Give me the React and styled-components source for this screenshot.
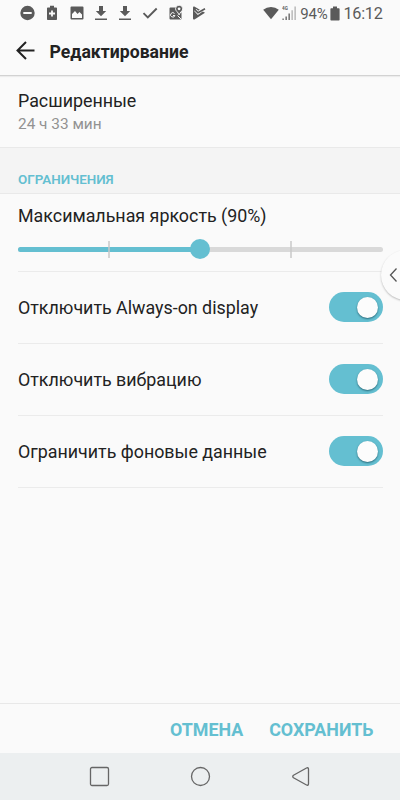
import React, { useState } from "react";
import styled, { createGlobalStyle } from "styled-components";

const GlobalStyle = createGlobalStyle`
	* {
		box-sizing: border-box;
	}
	body {
		margin: 0;
		background: #fafafa;
		font-family: Roboto, "Noto Sans", sans-serif;
	}
	button {
		border: none;
		padding: 0;
		background: none;
		font-family: inherit;
	}
	svg {
		display: block;
		flex: none;
	}
`;

const Screen = styled.div`
	position: relative;
	width: 400px;
	height: 800px;
	display: flex;
	flex-direction: column;
	overflow: hidden;
	background: #fafafa;
	color: #222222;
`;

const StatusBar = styled.div`
	height: 26px;
	flex: none;
	display: flex;
	align-items: center;
	justify-content: space-between;
	padding: 0 17.5px 0 19px;
	color: #5a5a5a;
`;

const StatusGroup = styled.div`
	display: flex;
	align-items: center;
	gap: ${(props) => props.gap}px;
`;

const StatusText = styled.span`
	font-size: ${(props) => props.size}px;
	line-height: 26px;
	letter-spacing: ${(props) => props.spacing || 0}px;
	padding-top: 2px;
`;

const Header = styled.header`
	height: 50px;
	flex: none;
	display: flex;
	align-items: center;
	gap: 14px;
	padding: 0 15.5px;
	border-bottom: 1px solid #d2d2d2;
	box-shadow: 0 1px 1px #ececec;
`;

const Title = styled.h1`
	margin: 0;
	padding-top: 2px;
	font-size: 17.65px;
	font-weight: 700;
	line-height: 24px;
`;

const Summary = styled.div`
	height: 71px;
	flex: none;
	padding: 13px 18px 0;
`;

const Label = styled.div`
	font-size: 17.85px;
	line-height: 24px;
	white-space: nowrap;
`;

const Duration = styled.div`
	font-size: 15.4px;
	line-height: 23px;
	color: #929292;
`;

const SectionTitle = styled.div`
	height: 47px;
	flex: none;
	padding: 23px 18px 0;
	border-top: 1px solid #e9e9e9;
	border-bottom: 1px solid #e9e9e9;
	background: #f4f4f4;
	color: #64bfd1;
	font-size: 13.4px;
	font-weight: 600;
	line-height: 18px;
`;

const Settings = styled.main`
	flex: 1;
	padding: 0 17.5px 0 18px;
`;

const SliderRow = styled.div`
	height: 78px;
	padding-top: 10px;
	border-bottom: 1px solid #ebebeb;
`;

const Slider = styled.div`
	height: 20px;
	margin-top: 11px;
	display: grid;
	align-items: center;
	> * {
		grid-area: 1 / 1;
	}
`;

const Track = styled.div`
	height: 5px;
	width: ${(props) => (props.$filled ? "50%" : "100%")};
	border-radius: 3px;
	background: ${(props) => (props.$filled ? "#64bfd1" : "#d9d9d9")};
`;

const Ticks = styled.div`
	display: flex;
	justify-content: space-between;
	width: 184px;
	justify-self: center;
	i {
		width: 2px;
		height: 17px;
		background: rgba(200, 200, 200, 0.75);
	}
`;

const Thumb = styled.div`
	width: 20px;
	height: 20px;
	justify-self: center;
	border-radius: 50%;
	background: #64bfd1;
`;

const Row = styled.div`
	height: 72px;
	display: flex;
	align-items: center;
	justify-content: space-between;
	border-bottom: 1px solid #ebebeb;
`;

const Switch = styled.button`
	width: 53.5px;
	height: 30px;
	margin-bottom: 1px;
	display: flex;
	align-items: center;
	justify-content: ${(props) => (props.$on ? "flex-end" : "flex-start")};
	padding: 0 4.5px;
	border-radius: 15px;
	background: ${(props) => (props.$on ? "#64bfd1" : "#cccccc")};
	span {
		width: 21px;
		height: 21px;
		border-radius: 50%;
		background: #fcfcfc;
		box-shadow: 0 1px 2px rgba(0, 50, 65, 0.6);
	}
`;

const Actions = styled.footer`
	height: 50px;
	flex: none;
	display: flex;
	align-items: center;
	justify-content: flex-end;
	gap: 26px;
	padding: 2px 26.5px 0 0;
	border-top: 1px solid #e8e8e8;
	button {
		color: #64bfd1;
		font-size: 17.85px;
		font-weight: 700;
		line-height: 24px;
	}
`;

const NavBar = styled.nav`
	height: 47px;
	flex: none;
	display: flex;
	align-items: center;
	justify-content: space-between;
	padding: 0 89px;
	background: #eceff0;
`;

const EdgeHandle = styled.button`
	position: absolute;
	top: 250px;
	left: 381px;
	width: 50px;
	height: 50px;
	display: flex;
	align-items: center;
	padding-left: 7px;
	border-radius: 50%;
	background: #fbfbfb;
	box-shadow: 0 1px 2px rgba(0, 0, 0, 0.25);
`;

const DownloadIcon = () => (
	<svg width='14' height='16' viewBox='0 0 14 16' fill='currentColor'>
		<path d='M5 1h4v5h3.2L7 11.2 1.8 6H5zM1 13.6h12v1.4H1z' />
	</svg>
);

const NotificationIcons = () => (
	<StatusGroup gap={10.3}>
		<svg width='16' height='16' viewBox='0 0 16 16'>
			<circle cx='8.5' cy='8' r='7.2' fill='currentColor' />
			<path d='M4.3 8h8.4' stroke='#fafafa' strokeWidth='2' />
		</svg>
		<svg width='14' height='16' viewBox='0 0 14 16'>
			<path
				fill='currentColor'
				d='M5 .8h4v1.6h2.2q.8 0 .8.8v11q0 .8-.8.8H2.8Q2 15 2 14.200V3.200q0-.8.8-.8H5z'
			/>
			<path d='M7 5.500v6M4 8.500h6' stroke='#fafafa' strokeWidth='1.800' />
		</svg>
		<svg width='14' height='16' viewBox='0 0 14 16'>
			<path
				fill='currentColor'
				fillRule='evenodd'
				d='M1.500 1.500h11q1 0 1 1v11q0 1-1 1h-11q-1 0-1-1v-11q0-1 1-1zM2 13h10V9.500L9.500 7 7.500 9 5 6 2 9z'
			/>
		</svg>
		<DownloadIcon />
		<DownloadIcon />
		<svg width='16' height='16' viewBox='0 0 16 16' fill='none'>
			<path d='M1.500 8.200l4.300 4.300L14.700 3.500' stroke='currentColor' strokeWidth='1.900' />
		</svg>
		<svg width='14' height='16' viewBox='1 0 14 16'>
			<path fill='currentColor' d='M2.500 2.500H12v5h1.500v6q0 1-1 1h-10q-1 0-1-1v-10q0-1 1-1z' />
			<path
				fill='none'
				stroke='#fafafa'
				strokeWidth='1'
				d='M6.500 8.500A2.200 2.200 0 1 0 6.900 10.500H5M9.500 10.500l3.500 3.500'
			/>
			<path
				fill='currentColor'
				stroke='#fafafa'
				strokeWidth='.9'
				d='M11.100.2a3.600 3.600 0 0 1 3.600 3.600c0 2.300-2.600 3-3.600 6.200-1-3.200-3.600-3.900-3.600-6.200A3.600 3.600 0 0 1 11.100.2z'
			/>
			<circle cx='11.100' cy='3.800' r='1.400' fill='#fafafa' />
		</svg>
		<svg width='14' height='16' viewBox='2 0 14 16'>
			<path
				fill='currentColor'
				d='M3.300 1.500L14 7.700 3.500 14.400q-1.500.6-1.500-.9V2.500Q2 1 3.300 1.500z'
			/>
			<path d='M4.300 5l2.700 2.800L13.800 3' fill='none' stroke='#fafafa' strokeWidth='3.200' />
			<path d='M4 4.800l3 3L14 3.700' fill='none' stroke='currentColor' strokeWidth='1.700' />
		</svg>
	</StatusGroup>
);

const WifiIcon = () => (
	<svg width='16' height='14' viewBox='0 0 16 14' fill='currentColor'>
		<path d='M8 13.200L.2 3.800Q3.500 1 8 1t7.800 2.800z' />
	</svg>
);

const SignalIcon = () => (
	<svg width='15' height='16' viewBox='0 0 15 16' fill='currentColor'>
		<text x='0' y='5' fontSize='4.600' fontWeight='700'>
			4G
		</text>
		<path d='M.5 13.500h1.200V15H.5zM3.500 11.500h1.300V15H3.500zM6.500 8.500h1.300V15H6.500z' />
		<path opacity='.4' d='M9.400 5.200h1.500V15H9.400zM12.400 1.500h1.500V15h-1.500z' />
	</svg>
);

const BatteryIcon = () => (
	<svg width='10' height='15' viewBox='0 0 10 15' fill='currentColor'>
		<path d='M3 .5h4v1.700h1.800q.8 0 .8.8v10.700q0 .8-.8.8H1.200q-.8 0-.8-.8V3q0-.8.8-.8H3z' />
	</svg>
);

const options = [
	{ key: "aod", label: "Отключить Always-on display" },
	{ key: "vibration", label: "Отключить вибрацию" },
	{ key: "data", label: "Ограничить фоновые данные" },
];

export default function App() {
	const [enabled, setEnabled] = useState({ aod: true, vibration: true, data: true });

	const toggle = (key) => {
		setEnabled({ ...enabled, [key]: !enabled[key] });
	};

	return (
		<Screen>
			<GlobalStyle />
			<StatusBar>
				<NotificationIcons />
				<StatusGroup gap={3}>
					<WifiIcon />
					<SignalIcon />
					<StatusText size={15} spacing={-0.25}>
						94%
					</StatusText>
					<BatteryIcon />
					<StatusText size={16.3} spacing={-0.3}>
						16:12
					</StatusText>
				</StatusGroup>
			</StatusBar>
			<Header>
				<svg width='20' height='20' viewBox='0 0 20 20' fill='none' stroke='#222' strokeWidth='2'>
					<path d='M18.500 9.500H1.700M10 1L1.500 9.500l8.500 8.500' />
				</svg>
				<Title>Редактирование</Title>
			</Header>
			<Summary>
				<Label>Расширенные</Label>
				<Duration>24 ч 33 мин</Duration>
			</Summary>
			<SectionTitle>ОГРАНИЧЕНИЯ</SectionTitle>
			<Settings>
				<SliderRow>
					<Label>Максимальная яркость (90%)</Label>
					<Slider>
						<Track />
						<Track $filled />
						<Ticks>
							<i />
							<i />
						</Ticks>
						<Thumb />
					</Slider>
				</SliderRow>
				{options.map(({ key, label }) => (
					<Row key={key}>
						<Label>{label}</Label>
						<Switch $on={enabled[key]} onClick={() => toggle(key)}>
							<span />
						</Switch>
					</Row>
				))}
			</Settings>
			<Actions>
				<button>ОТМЕНА</button>
				<button>СОХРАНИТЬ</button>
			</Actions>
			<NavBar>
				<svg width='21' height='21' viewBox='0 0 21 21' fill='none' stroke='#666' strokeWidth='1.300'>
					<rect x='1.500' y='1.500' width='18' height='18' rx='1.500' />
				</svg>
				<svg width='21' height='21' viewBox='0 0 21 21' fill='none' stroke='#666' strokeWidth='1.300'>
					<circle cx='10.500' cy='10.500' r='9' />
				</svg>
				<svg width='21' height='21' viewBox='0 0 21 21' fill='none' stroke='#666' strokeWidth='1.300'>
					<path d='M16.500 2L3.500 9.300q-1.500 1.200 0 2.400L16.500 19q2 .8 2-1.200V3.200Q18.500 1.200 16.500 2z' />
				</svg>
			</NavBar>
			<EdgeHandle>
				<svg width='10' height='16' viewBox='0 0 10 16' fill='none' stroke='#555' strokeWidth='1.300'>
					<path d='M8.500 1.500L2.500 8l6 6.500' />
				</svg>
			</EdgeHandle>
		</Screen>
	);
}
